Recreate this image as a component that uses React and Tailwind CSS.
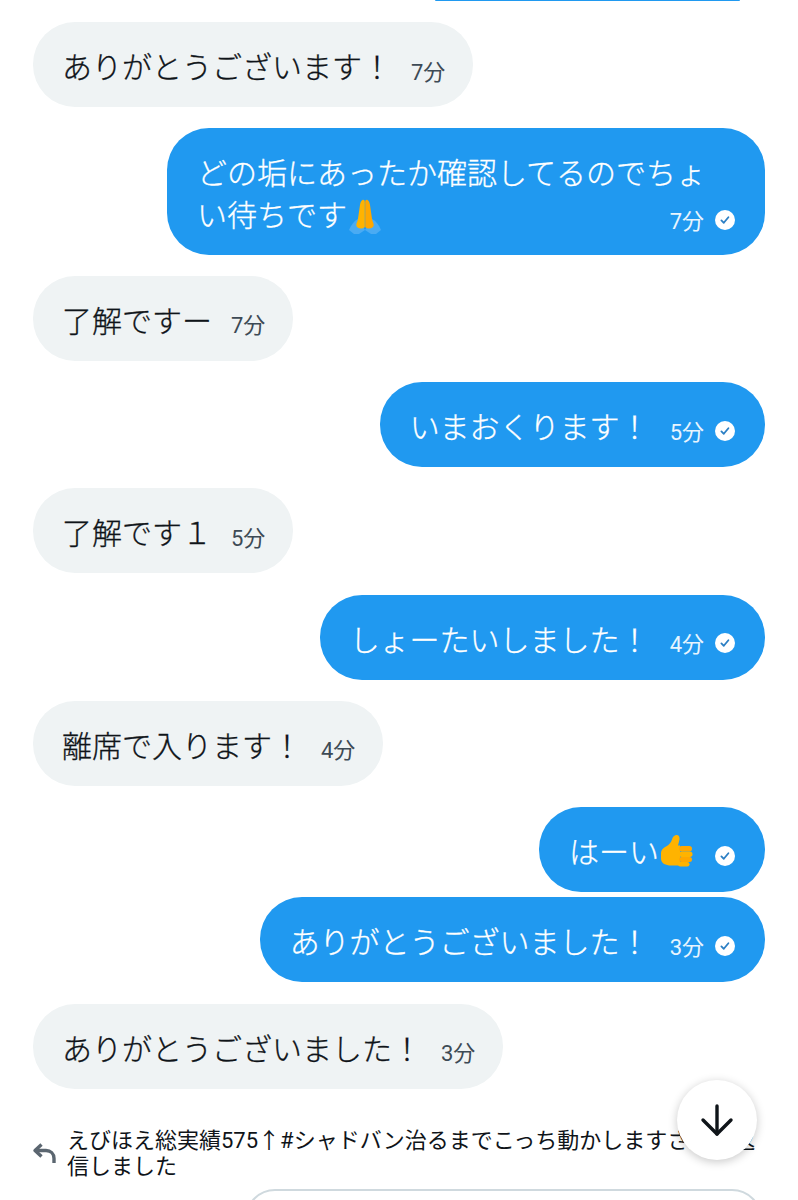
import React from 'react';
import { ArrowDown } from 'lucide-react';

const fontStack = "font-['Roboto','Noto_Sans_CJK_JP',sans-serif]";
const bodyText = 'text-[30px] font-light [-webkit-text-stroke:0.3px_currentColor]';

const messages = [
  { id: 1, side: 'left', text: 'ありがとうございます！', time: '7分' },
  { id: 2, side: 'right', lines: ['どの垢にあったか確認してるのでちょ', 'い待ちです'], emoji: 'pray', time: '7分' },
  { id: 3, side: 'left', text: '了解ですー', time: '7分' },
  { id: 4, side: 'right', text: 'いまおくります！', time: '5分' },
  { id: 5, side: 'left', text: '了解です１', time: '5分' },
  { id: 6, side: 'right', text: 'しょーたいしました！', time: '4分' },
  { id: 7, side: 'left', text: '離席で入ります！', time: '4分' },
  { id: 8, side: 'right', text: 'はーい', emoji: 'thumb', grouped: true },
  { id: 9, side: 'right', text: 'ありがとうございました！', time: '3分' },
  { id: 10, side: 'left', text: 'ありがとうございました！', time: '3分' },
];

const ReadCheck = () => (
  <svg width="20" height="20" viewBox="0 0 20 20" className="shrink-0">
    <circle cx="10" cy="10" r="10" fill="#ffffff" />
    <path d="M6.4 10.400l2.400 2.400 4.600-5.600" fill="none" stroke="#2b7fc4" strokeWidth="1.800" strokeLinecap="round" strokeLinejoin="round" />
  </svg>
);

const PrayEmoji = () => (
  <svg width="36" height="38" viewBox="0 0 36 38" className="shrink-0">
    <path d="M2 33c2-5 5-9 9-11l7 11-6 4H7z" fill="#4aabf3" />
    <path d="M34 33c-2-5-5-9-9-11l-7 11 6 4h5z" fill="#4aabf3" />
    <path d="M15.500 3c1.300-.6 2.300.4 2.300 2v25c-1 1-2.500 1.500-4 1.500-2.500 0-4.500-1.500-4.500-3.500 0-1.500.8-3 1.500-5L13 8c.4-2.500 1.200-4.500 2.500-5z" fill="#ffb300" />
    <path d="M20.500 3c-1.300-.6-2.300.4-2.300 2v25c1 1 2.500 1.500 4 1.500 2.500 0 4.500-1.500 4.500-3.500 0-1.500-.8-3-1.500-5L23 8c-.4-2.500-1.200-4.500-2.500-5z" fill="#ffa700" />
  </svg>
);

const ThumbEmoji = () => (
  <svg width="36" height="36" viewBox="0 0 36 36" className="shrink-0">
    <path d="M2 21c0-3 2-5 5-6.500 3-1.500 5-4 6-7 .6-2 1.500-4 4-4.500 2.500-.4 4 1.500 3.500 4.500-.3 2-1 4-1.500 6H21v20h-9c-5 0-10-2-10-7z" fill="#ffb300" />
    <rect x="20" y="14" width="13" height="5.500" rx="2.700" fill="#ffa700" />
    <rect x="20" y="19.500" width="13.500" height="5.500" rx="2.700" fill="#ffb300" />
    <rect x="20" y="25" width="13" height="5" rx="2.500" fill="#ffa700" />
    <rect x="19" y="30" width="11.500" height="4.500" rx="2.200" fill="#ffb300" />
  </svg>
);

const Emoji = ({ name }) => (name === 'pray' ? <PrayEmoji /> : <ThumbEmoji />);

const MessageTime = ({ time, mine }) => (
  <span className={`flex items-center gap-[11px] text-[22px] leading-[30px] whitespace-nowrap ${mine ? 'text-[#e8f5fe]' : 'text-[#3d4a55]'}`}>
    {time && <span className="mt-[4px]">{time}</span>}
    {mine && <ReadCheck />}
  </span>
);

const MessageBubble = ({ message }) => {
  const mine = message.side === 'right';
  const bubbleColor = mine ? 'bg-[#2099f0] text-white self-end' : 'bg-[#eff3f4] text-[#0f1419] self-start';

  // Two line message keeps the time on the last row
  if (message.lines) {
    return (
      <div className={`h-[126.25px] w-[598px] rounded-[42px] px-[30px] pt-[25px] ${bubbleColor}`}>
        <div className={`${bodyText} leading-[42px] whitespace-nowrap`}>{message.lines[0]}</div>
        <div className="flex items-center justify-between">
          <div className={`flex items-center ${bodyText} leading-[42px]`}>
            <span>{message.lines[1]}</span>
            <Emoji name={message.emoji} />
          </div>
          <div className="mt-[7px]"><MessageTime time={message.time} mine={mine} /></div>
        </div>
      </div>
    );
  }

  return (
    <div className={`flex items-center h-[85px] rounded-[42px] ${mine ? 'pl-[30px] pr-[30px]' : 'pl-[29px] pr-[28px]'} ${bubbleColor}`}>
      <span className={`mt-[6px] ${bodyText} leading-[41px] whitespace-nowrap`}>{message.text}</span>
      {message.emoji && <Emoji name={message.emoji} />}
      <div className={`mt-[12px] ${mine ? 'ml-[20px]' : 'ml-[19px]'}`}>
        <MessageTime time={message.time} mine={mine} />
      </div>
    </div>
  );
};

const App = () => {
  return (
    <div className={`relative h-[1200px] w-[798px] overflow-hidden bg-white ${fontStack}`}>
      <div className="flex flex-col px-[33px]">
        {/* Bottom edge of the previous bubble */}
        <div className="mb-[21px] mr-[25px] h-px w-[305px] self-end rounded-b-full bg-[#2099f0]"></div>

        {messages.map((m) => (
          <div key={m.id} className={`flex flex-col ${m.grouped ? 'mb-[5.25px]' : 'mb-[21.25px]'}`}>
            <MessageBubble message={m} />
          </div>
        ))}

        {/* Reply notice */}
        <div className="mt-[18px] flex items-center gap-[11px]">
          <svg width="24" height="24" viewBox="0 0 24 24" className="-ml-[1px] shrink-0 text-[#5b6670]" fill="none" stroke="currentColor" strokeWidth="3.400">
            <path d="M9.500 2.500L3 8.500 9.500 14.500" strokeLinejoin="round" />
            <path d="M4 8.500H14c4.500 0 8 3 8 8v4.500" />
          </svg>
          <p className="w-[692px] text-[22px] leading-[26px] text-[#0f1419]">えびほえ総実績575↑#シャドバン治るまでこっち動かしますさんに返信しました</p>
        </div>
      </div>

      {/* Message input, cut off by the screen edge */}
      <div className="absolute left-[245px] top-[1189px] h-[60px] w-[517px] rounded-[30px] border-2 border-[#cfd9de] bg-white"></div>

      {/* Scroll to bottom */}
      <button className="absolute left-[677px] top-[1080px] flex h-[80px] w-[80px] items-center justify-center rounded-full bg-white text-[#0f1419] shadow-[0_2px_10px_rgba(0,0,0,0.22)]">
        <ArrowDown size={48} strokeWidth={1.7} />
      </button>
    </div>
  );
};

export default App;
